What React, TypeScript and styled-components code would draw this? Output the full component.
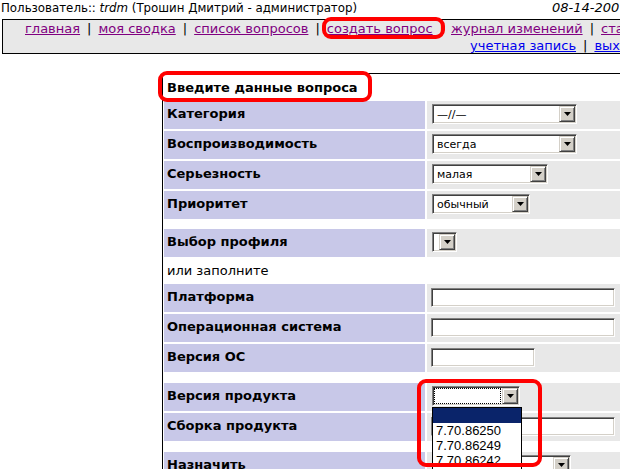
import React from "react";
import styled, { createGlobalStyle } from "styled-components";

const GlobalStyle = createGlobalStyle`
  html, body { margin: 0; padding: 0; background: #fff; overflow: hidden; }
  body { font-family: "DejaVu Sans", Verdana, sans-serif; color: #000; }
`;

const Page = styled.div`
  position: relative;
  width: 700px;
  height: 469px;
  overflow: hidden;
`;

const Header = styled.div`
  display: grid;
  grid-template-columns: 551px auto;
  height: 18px;
  line-height: 16px;
  padding-left: 1px;
  white-space: nowrap;
`;

const UserInfo = styled.span`
  font-size: 11.8px;
`;

const DateText = styled.span`
  font-size: 13px;
  font-style: italic;
`;

const Italic = styled.span`
  font-style: italic;
`;

const Nav = styled.nav`
  margin: 1px 0 0 2px;
  width: 670px;
  height: 35px;
  box-sizing: border-box;
  border: 1px solid #000;
  background: #e8e8e8;
  font-size: 13px;
  line-height: 17px;
`;

const NavRow = styled.div<{ $end?: boolean }>`
  display: flex;
  justify-content: ${(p) => (p.$end ? "flex-end" : "flex-start")};
  padding: ${(p) => (p.$end ? "0 34px 0 0" : "0 0 0 22px")};
  white-space: nowrap;
`;

const NavLink = styled.a<{ $visited?: boolean }>`
  color: ${(p) => (p.$visited ? "#800080" : "#0000ee")};
  text-decoration: underline;
`;

const Sep = styled.span`
  margin: 0 7px;
  color: #000;
`;

const Form = styled.div`
  margin: 19px 0 0 162px;
  width: 520px;
  border-top: 1px solid #000;
  border-left: 1px solid #000;
  padding: 1px 0 0 1px;
  display: grid;
  grid-template-columns: 261px 1fr;
  gap: 2px;
`;

const Title = styled.div`
  grid-column: 1 / -1;
  height: 24px;
  box-sizing: border-box;
  padding: 5px 0 0 3px;
  line-height: 16px;
  font-size: 13px;
  font-weight: bold;
  background: #fff;
`;

const Label = styled.div`
  background: #c8c8e8;
  height: 28px;
  box-sizing: border-box;
  padding: 5px 3px 0;
  font-size: 13px;
  font-weight: bold;
  line-height: 16px;
  white-space: nowrap;
`;

const Value = styled.div`
  position: relative;
  background: #e8e8e8;
  height: 28px;
  box-sizing: border-box;
  padding: 3px 0 0 4px;
`;

const Spacer = styled.div<{ $h: number }>`
  grid-column: 1 / -1;
  height: ${(p) => p.$h}px;
  background: #fff;
`;

const Note = styled.div`
  grid-column: 1 / -1;
  height: 23px;
  box-sizing: border-box;
  padding: 4px 0 0 3px;
  line-height: 16px;
  font-size: 13px;
  background: #fff;
`;

const SelectWrap = styled.div`
  position: relative;
  margin-left: 1px;
`;

const SelectBox = styled.div<{ $w: number }>`
  width: ${(p) => p.$w}px;
  height: 20px;
  box-sizing: border-box;
  display: flex;
  align-items: stretch;
  background: #fff;
  border-style: solid;
  border-width: 1px;
  border-color: #808080 #fff #fff #808080;
  box-shadow: inset 1px 1px 0 #404040, inset -1px -1px 0 #d4d0c8;
  padding: 1px;
  font-size: 11px;
`;

const SelectText = styled.div<{ $focus?: boolean }>`
  flex: 1;
  min-width: 0;
  padding-left: 2px;
  line-height: 16px;
  white-space: nowrap;
  overflow: hidden;
  box-sizing: border-box;
  border: 1px ${(p) => (p.$focus ? "dotted #000" : "solid transparent")};
  margin-right: 1px;
`;

const ArrowButton = styled.div`
  width: 16px;
  box-sizing: border-box;
  background: #d4d0c8;
  border-style: solid;
  border-width: 1px;
  border-color: #d4d0c8 #404040 #404040 #d4d0c8;
  box-shadow: inset 1px 1px 0 #fff, inset -1px -1px 0 #808080;
  display: flex;
  align-items: center;
  justify-content: center;
`;

const TextInput = styled.input<{ $w: number }>`
  display: block;
  width: ${(p) => p.$w}px;
  height: 19px;
  margin: 1px 0 0 0;
  box-sizing: border-box;
  padding: 0 2px;
  background: #fff;
  border-style: solid;
  border-width: 1px;
  border-color: #808080 #fff #fff #808080;
  box-shadow: inset 1px 1px 0 #404040, inset -1px -1px 0 #d4d0c8;
  outline: none;
  font: 11px "DejaVu Sans", Verdana, sans-serif;
`;

const DropList = styled.ul`
  position: absolute;
  top: 21px;
  left: 0;
  z-index: 3;
  width: 88px;
  margin: 0;
  padding: 0;
  list-style: none;
  background: #fff;
  border: 1px solid #000;
  font-family: "Liberation Sans", Arial, sans-serif;
  font-size: 13px;
`;

const DropItem = styled.li<{ $active?: boolean }>`
  height: 15px;
  line-height: 15px;
  padding-left: 3px;
  background: ${(p) => (p.$active ? "#0a246a" : "#fff")};
  color: ${(p) => (p.$active ? "#fff" : "#000")};
`;

const Callout = styled.div<{ $x: number; $y: number; $w: number; $h: number }>`
  position: absolute;
  left: ${(p) => p.$x}px;
  top: ${(p) => p.$y}px;
  width: ${(p) => p.$w}px;
  height: ${(p) => p.$h}px;
  box-sizing: border-box;
  border: 4px solid #f00;
  border-radius: 9px;
  pointer-events: none;
  z-index: 5;
`;

const Arrow = () => (
  <svg width="7" height="4" viewBox="0 0 7 4">
    <polygon points="0,0 7,0 3.5,4" fill="#000" />
  </svg>
);

type SelectProps = {
  w: number;
  text?: string;
  focus?: boolean;
  children?: React.ReactNode;
};

const Select = ({ w, text, focus, children }: SelectProps) => (
  <SelectWrap>
    <SelectBox $w={w}>
      <SelectText $focus={focus}>{text}</SelectText>
      <ArrowButton>
        <Arrow />
      </ArrowButton>
    </SelectBox>
    {children}
  </SelectWrap>
);

export default function App() {
  return (
    <Page>
      <GlobalStyle />
      <Header>
        <UserInfo>
          Пользователь:: <Italic>trdm</Italic> (Трошин Дмитрий - администратор)
        </UserInfo>
        <DateText>08-14-2007 10:35 MSD</DateText>
      </Header>
      <Nav>
        <NavRow>
          <NavLink $visited href="#">главная</NavLink>
          <Sep>|</Sep>
          <NavLink $visited href="#">моя сводка</NavLink>
          <Sep>|</Sep>
          <NavLink $visited href="#">список вопросов</NavLink>
          <Sep>|</Sep>
          <NavLink $visited href="#">создать вопрос</NavLink>
          <Sep>|</Sep>
          <NavLink $visited href="#">журнал изменений</NavLink>
          <Sep>|</Sep>
          <NavLink $visited href="#">статистика</NavLink>
        </NavRow>
        <NavRow $end>
          <NavLink href="#">учетная запись</NavLink>
          <Sep>|</Sep>
          <NavLink href="#">выход</NavLink>
        </NavRow>
      </Nav>
      <Form>
        <Title>Введите данные вопроса</Title>
        <Label>Категория</Label>
        <Value>
          <Select w={145} text="—//—" />
        </Value>
        <Label>Воспроизводимость</Label>
        <Value>
          <Select w={145} text="всегда" />
        </Value>
        <Label>Серьезность</Label>
        <Value>
          <Select w={116} text="малая" />
        </Value>
        <Label>Приоритет</Label>
        <Value>
          <Select w={98} text="обычный" />
        </Value>
        <Spacer $h={6} />
        <Label>Выбор профиля</Label>
        <Value>
          <Select w={25} />
        </Value>
        <Note>или заполните</Note>
        <Label>Платформа</Label>
        <Value>
          <TextInput $w={184} readOnly />
        </Value>
        <Label>Операционная система</Label>
        <Value>
          <TextInput $w={184} readOnly />
        </Value>
        <Label>Версия ОС</Label>
        <Value>
          <TextInput $w={104} readOnly />
        </Value>
        <Spacer $h={7} />
        <Label>Версия продукта</Label>
        <Value>
          <Select w={88} focus>
            <DropList>
              <DropItem $active>&nbsp;</DropItem>
              <DropItem>7.70.86250</DropItem>
              <DropItem>7.70.86249</DropItem>
              <DropItem>7.70.86242</DropItem>
              <DropItem>7.70.86240</DropItem>
            </DropList>
          </Select>
        </Value>
        <Label>Сборка продукта</Label>
        <Value>
          <TextInput $w={184} readOnly />
        </Value>
        <Spacer $h={7} />
        <Label>Назначить</Label>
        <Value>
          <Select w={139} />
        </Value>
      </Form>
      <Callout $x={322} $y={17} $w={123} $h={22} />
      <Callout $x={158} $y={71} $w={214} $h={31} />
      <Callout $x={417} $y={379} $w={125} $h={88} />
    </Page>
  );
}
